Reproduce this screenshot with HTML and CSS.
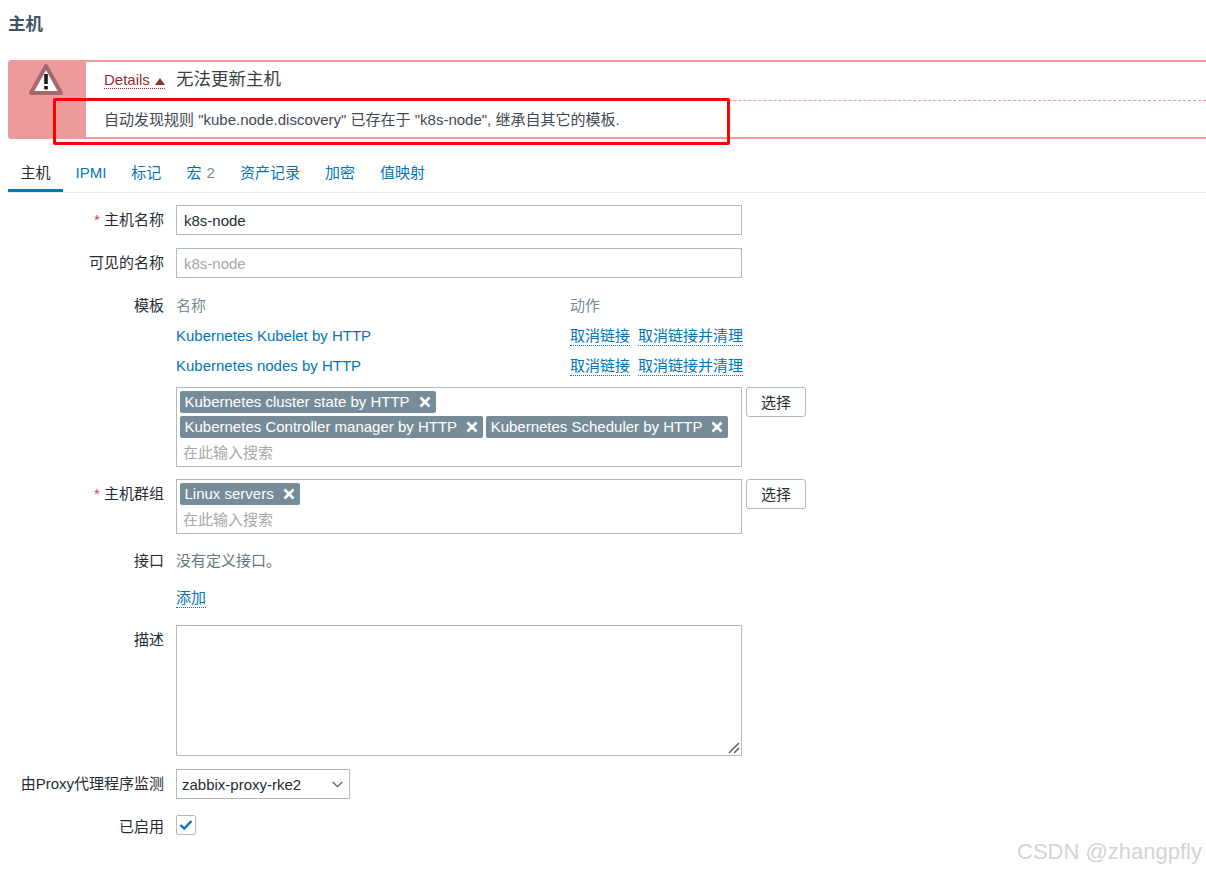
FILE: index.html
```html
<!DOCTYPE html>
<html lang="zh-CN">
<head>
  <meta charset="UTF-8">
  <title>主机</title>
  <link rel="stylesheet" href="styles.css">
</head>
<body>
  <h1 class="page-title">主机</h1>

  <div class="msg-bad">
    <div class="msg-icon">
      <svg width="36" height="34" viewBox="0 0 36 34">
        <path d="M18 3 L33 30 H3 Z" fill="#fff" stroke="#a3696d" stroke-width="4" stroke-linejoin="round"/>
        <rect x="16.2" y="11" width="3.6" height="10" fill="#1a1a1a"/>
        <rect x="16.2" y="23" width="3.6" height="3.4" fill="#1a1a1a"/>
      </svg>
    </div>
    <div class="msg-main">
      <div class="msg-head">
        <a class="msg-details">Details <span class="arrow-up"></span></a>
        <span class="msg-title">无法更新主机</span>
      </div>
      <div class="msg-body">自动发现规则 "kube.node.discovery" 已存在于 "k8s-node", 继承自其它的模板.</div>
    </div>
  </div>

  <ul class="tabs">
    <li class="active">主机</li>
    <li>IPMI</li>
    <li>标记</li>
    <li>宏 <span class="tab-count">2</span></li>
    <li>资产记录</li>
    <li>加密</li>
    <li>值映射</li>
  </ul>

  <form class="form-list">
    <div class="form-row">
      <label class="form-label"><span class="req">*</span> 主机名称</label>
      <div class="form-field"><input class="text-input" type="text" value="k8s-node"></div>
    </div>
    <div class="form-row">
      <label class="form-label">可见的名称</label>
      <div class="form-field"><input class="text-input" type="text" placeholder="k8s-node"></div>
    </div>
    <div class="form-row row-templates">
      <label class="form-label">模板</label>
      <div class="form-field">
        <div class="tpl-line tpl-head">
          <span class="tpl-name">名称</span>
          <span>动作</span>
        </div>
        <div class="tpl-line">
          <a class="tpl-name link">Kubernetes Kubelet by HTTP</a>
          <span class="tpl-actions"><a class="link dotted">取消链接</a><a class="link dotted">取消链接并清理</a></span>
        </div>
        <div class="tpl-line">
          <a class="tpl-name link">Kubernetes nodes by HTTP</a>
          <span class="tpl-actions"><a class="link dotted">取消链接</a><a class="link dotted">取消链接并清理</a></span>
        </div>
        <div class="multi-wrap">
          <div class="multi-select">
            <span class="tag">Kubernetes cluster state by HTTP<svg class="tag-x" viewBox="0 0 12 12"><path d="M1.5 1.5 L10.5 10.5 M10.5 1.5 L1.5 10.5"/></svg></span>
            <span class="tag">Kubernetes Controller manager by HTTP<svg class="tag-x" viewBox="0 0 12 12"><path d="M1.5 1.5 L10.5 10.5 M10.5 1.5 L1.5 10.5"/></svg></span>
            <span class="tag">Kubernetes Scheduler by HTTP<svg class="tag-x" viewBox="0 0 12 12"><path d="M1.5 1.5 L10.5 10.5 M10.5 1.5 L1.5 10.5"/></svg></span>
            <div class="multi-search">在此输入搜索</div>
          </div>
          <button class="btn-grey" type="button">选择</button>
        </div>
      </div>
    </div>
    <div class="form-row row-groups">
      <label class="form-label"><span class="req">*</span> 主机群组</label>
      <div class="form-field">
        <div class="multi-wrap">
          <div class="multi-select">
            <span class="tag">Linux servers<svg class="tag-x" viewBox="0 0 12 12"><path d="M1.5 1.5 L10.5 10.5 M10.5 1.5 L1.5 10.5"/></svg></span>
            <div class="multi-search">在此输入搜索</div>
          </div>
          <button class="btn-grey" type="button">选择</button>
        </div>
      </div>
    </div>
    <div class="form-row row-tight">
      <label class="form-label">接口</label>
      <div class="form-field plain-text">没有定义接口。</div>
    </div>
    <div class="form-row row-groups">
      <label class="form-label"></label>
      <div class="form-field plain-text"><a class="link dotted">添加</a></div>
    </div>
    <div class="form-row">
      <label class="form-label">描述</label>
      <div class="form-field">
        <div class="text-area">
          <svg class="resize-grip" width="12" height="12" viewBox="0 0 12 12"><path d="M1 11 L11 1 M6 11 L11 6" stroke="#666" stroke-width="1.6"/></svg>
        </div>
      </div>
    </div>
    <div class="form-row">
      <label class="form-label">由Proxy代理程序监测</label>
      <div class="form-field">
        <div class="select-box">
          <span>zabbix-proxy-rke2</span>
          <svg width="11" height="7" viewBox="0 0 11 7"><path d="M0.8 1 L5.5 5.7 L10.2 1" fill="none" stroke="#4a5a63" stroke-width="1.2"/></svg>
        </div>
      </div>
    </div>
    <div class="form-row">
      <label class="form-label">已启用</label>
      <div class="form-field">
        <div class="check-box">
          <svg width="14" height="12" viewBox="0 0 14 12"><path d="M1.5 6 L5.2 9.6 L12.5 2" fill="none" stroke="#0275b8" stroke-width="2.4"/></svg>
        </div>
      </div>
    </div>
  </form>

  <div class="note-box"></div>
  <div class="watermark">CSDN @zhangpfly</div>
</body>
</html>
```

FILE: styles.css
```css
* {
  margin: 0;
  padding: 0;
  box-sizing: border-box;
}
html, body {
  width: 100%;
  height: 100%;
  overflow: hidden;
}
body {
  position: relative;
  padding-left: 8px;
  background: #fff;
  color: #1f2c33;
  font-family: "Liberation Sans", "Noto Sans CJK SC", sans-serif;
  font-size: 15px;
}
.page-title {
  height: 60px;
  padding-top: 13px;
  font-size: 17.5px;
  line-height: 22px;
  font-weight: bold;
  color: #3f5664;
}

/* error message */
.msg-bad {
  display: flex;
  height: 79px;
  margin-right: -10px;
  background: #ec9a9a;
  border-radius: 3px 0 0 3px;
  padding: 2px 0;
}
.msg-icon {
  width: 78px;
  flex: none;
  padding: 1px 0 0 20px;
}
.msg-main {
  flex: 1;
  background: #fff;
  padding-left: 18px;
}
.msg-head {
  display: flex;
  align-items: flex-start;
  height: 39px;
  padding-top: 2px;
  border-bottom: 1px dashed #ec9a9a;
}
.msg-details {
  color: #922e30;
  border-bottom: 1px dotted #922e30;
  line-height: 17px;
  margin: 7px 11px 0 0;
}
.arrow-up {
  display: inline-block;
  width: 0;
  height: 0;
  margin-left: 1px;
  border-left: 5px solid transparent;
  border-right: 5px solid transparent;
  border-bottom: 7px solid #922e30;
}
.msg-title {
  margin-top: 2px;
  font-size: 17.5px;
  line-height: 26px;
  color: #3a3f42;
}
.msg-body {
  height: 36px;
  line-height: 38px;
  font-size: 15px;
  color: #3f4a50;
}

/* tabs */
.tabs {
  display: flex;
  list-style: none;
  height: 54px;
  padding-top: 21px;
  border-bottom: 1px solid #ebeef0;
  color: #0275b8;
}
.tabs li {
  padding: 0 12.5px;
  line-height: 26px;
  height: 32px;
}
.tabs li.active {
  color: #1f2c33;
  border-bottom: 3px solid #0275b8;
}
.tab-count {
  margin-left: 1px;
  color: #768d99;
}

/* form */
.form-list {
  padding-top: 12px;
}
.form-row {
  display: flex;
  margin-bottom: 13px;
}
.row-templates,
.row-groups {
  margin-bottom: 12px;
}
.row-tight {
  margin-bottom: 7px;
}
.form-label {
  width: 156px;
  flex: none;
  text-align: right;
  line-height: 29px;
}
.req {
  color: #e33734;
}
.form-field {
  margin-left: 12px;
  flex: 1;
}
.plain-text {
  line-height: 30px;
  color: #5f7785;
}
.text-input {
  display: block;
  width: 566px;
  height: 30px;
  padding: 0 7px;
  border: 1px solid #acbbc4;
  font: inherit;
  color: #1f2c33;
  outline: none;
}
.text-input::placeholder {
  color: #a8a8a8;
  opacity: 1;
}
.link {
  color: #0275b8;
}
.dotted {
  border-bottom: 1px dotted #0275b8;
  padding-bottom: 1px;
}

/* linked templates */
.tpl-line {
  display: flex;
  height: 30px;
  line-height: 30px;
}
.tpl-head {
  color: #768d99;
}
.tpl-name {
  width: 394px;
  flex: none;
}
.tpl-actions .link + .link {
  margin-left: 8px;
}
.multi-wrap {
  display: flex;
  align-items: flex-start;
}
.tpl-line + .multi-wrap {
  margin-top: 6px;
}
.multi-select {
  width: 566px;
  padding: 3px 3px 0;
  border: 1px solid #acbbc4;
  font-size: 0;
}
.tag {
  display: inline-flex;
  align-items: center;
  height: 22px;
  margin: 0 3px 3px 0;
  padding: 0 5px 1px 4.5px;
  background: #768d99;
  border-radius: 2px;
  color: #fff;
  font-size: 15px;
  vertical-align: top;
}
.tag-x {
  width: 12px;
  height: 12px;
  margin: 1px 0 0 9px;
  fill: none;
  stroke: #fff;
  stroke-width: 2.6;
}
.multi-search {
  height: 25px;
  padding-left: 3px;
  line-height: 24px;
  font-size: 15px;
  color: #a8a8a8;
}
.btn-grey {
  width: 60px;
  height: 30px;
  margin-left: 4px;
  padding-bottom: 2px;
  background: #fff;
  border: 1px solid #acbbc4;
  border-radius: 3px;
  color: #1f2c33;
  font: inherit;
}
.text-area {
  position: relative;
  width: 566px;
  height: 131px;
  border: 1px solid #acbbc4;
}
.resize-grip {
  position: absolute;
  right: 1px;
  bottom: 1px;
}
.select-box {
  display: flex;
  align-items: center;
  justify-content: space-between;
  width: 174px;
  height: 30px;
  padding: 0 6px 0 5px;
  border: 1px solid #acbbc4;
}
.check-box {
  display: flex;
  align-items: center;
  justify-content: center;
  width: 20px;
  height: 20px;
  margin-top: 3px;
  border: 1px solid #acbbc4;
  border-radius: 2px;
}

/* screenshot annotation and watermark */
.note-box {
  position: absolute;
  left: 53px;
  top: 98px;
  width: 677px;
  height: 47px;
  border: 3px solid #fe0000;
  border-radius: 2px;
}
.watermark {
  position: absolute;
  right: 4px;
  bottom: 6px;
  font-size: 22px;
  color: #d4d4d4;
}
```
